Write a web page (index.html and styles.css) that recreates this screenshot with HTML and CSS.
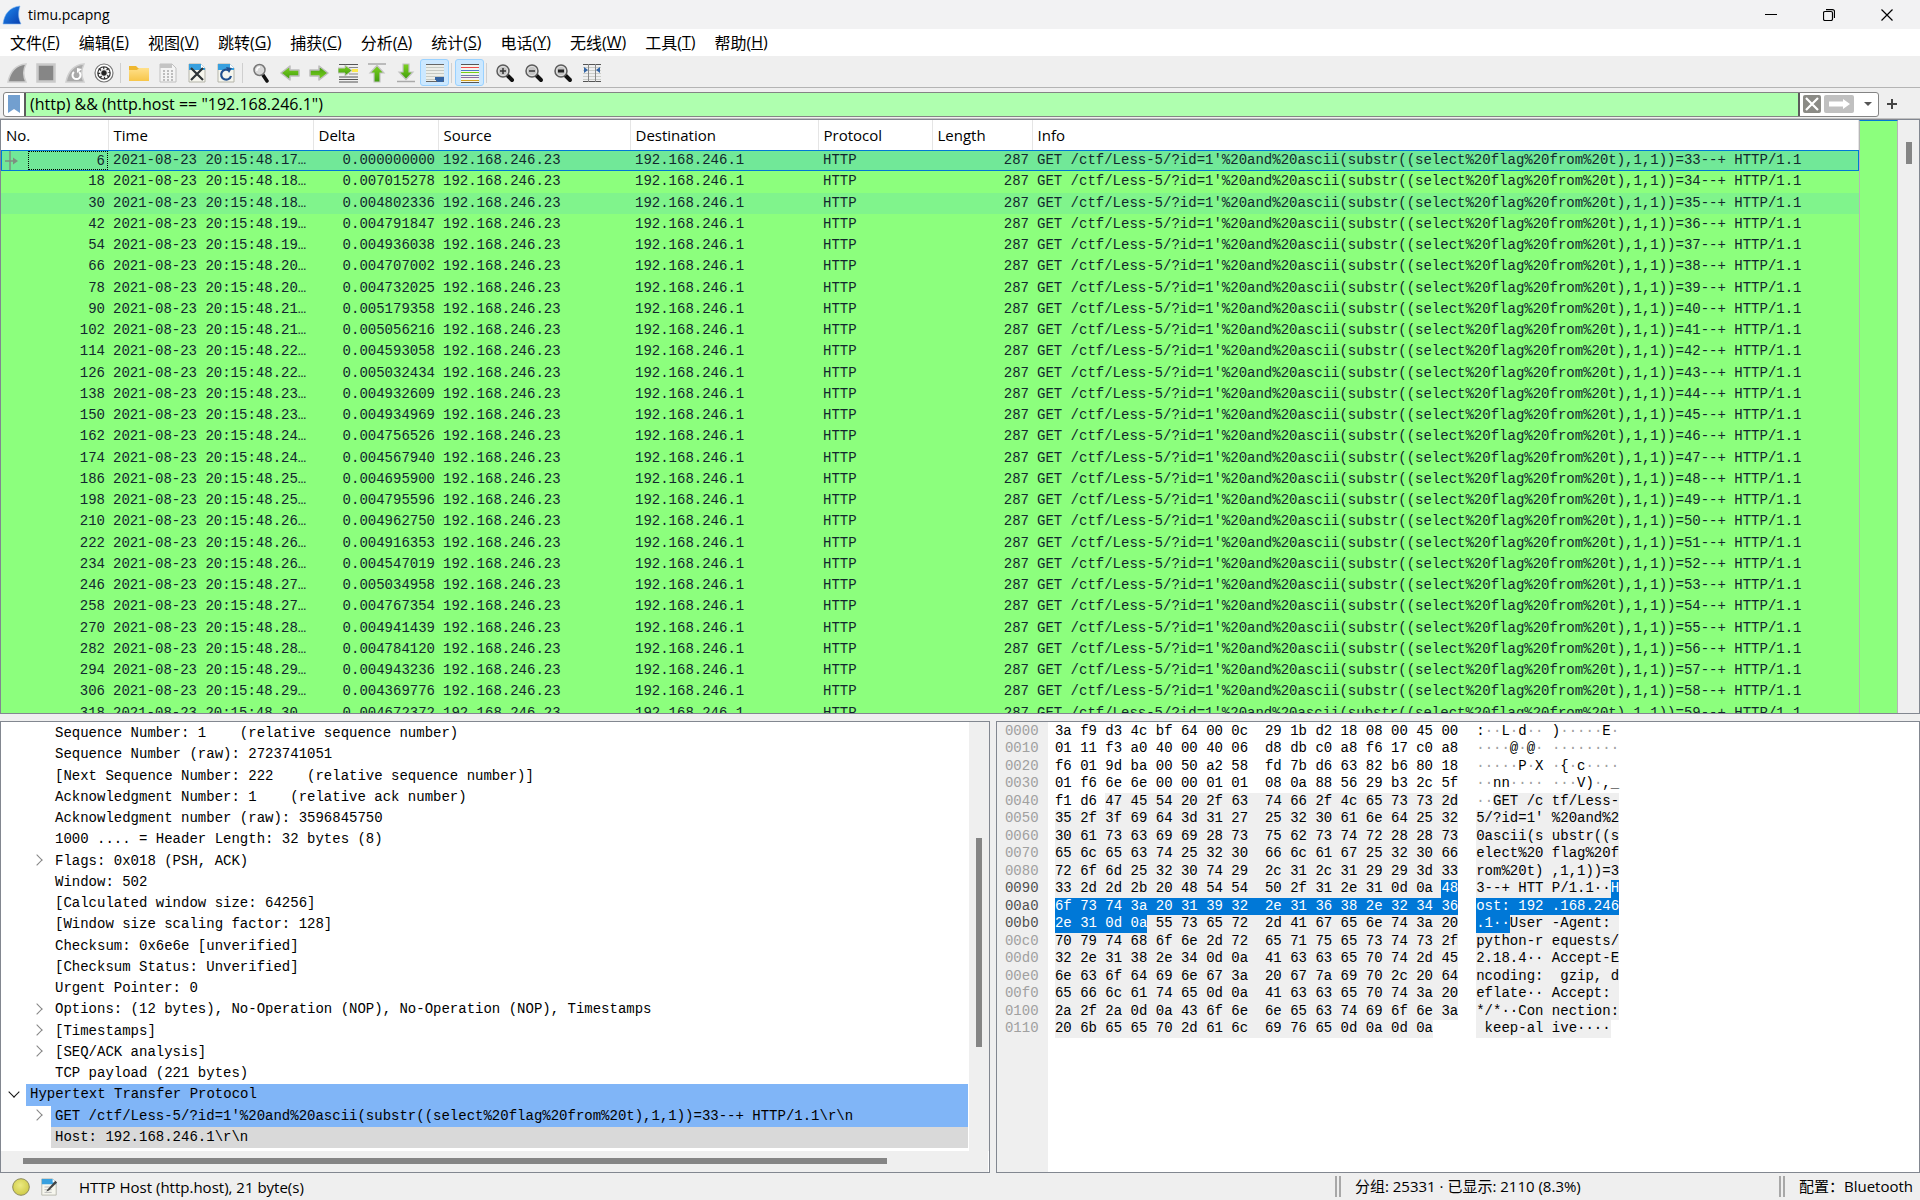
FILE: index.html
```html
<!DOCTYPE html>
<html lang="zh-CN">
<head>
    <meta charset="UTF-8">
    <meta name="viewport" content="width=device-width, initial-scale=1.0">
    <title>timu.pcapng</title>
    <link rel="stylesheet" href="styles.css">
</head>
<body>
    <!-- shared gradients and shapes -->
    <svg class="defs" width="0" height="0" aria-hidden="true">
        <defs>
            <linearGradient id="finBlue" x1="0" y1="0" x2="1" y2="1">
                <stop offset="0" stop-color="#1f8bf0"/>
                <stop offset="1" stop-color="#0a3fae"/>
            </linearGradient>
            <linearGradient id="arrowGreen" x1="0" y1="0" x2="0" y2="1">
                <stop offset="0" stop-color="#7ed321"/>
                <stop offset="1" stop-color="#3f9c0c"/>
            </linearGradient>
            <linearGradient id="folder" x1="0" y1="0" x2="0" y2="1">
                <stop offset="0" stop-color="#ffe08a"/>
                <stop offset="1" stop-color="#f7c64a"/>
            </linearGradient>
            <radialGradient id="bulb" cx="0.45" cy="0.4" r="0.6">
                <stop offset="0" stop-color="#ecea82"/>
                <stop offset="1" stop-color="#cfcb48"/>
            </radialGradient>
            <symbol id="lens" viewBox="0 0 20 20">
                <path d="M12 12l5 5" stroke="#111" stroke-width="4" stroke-linecap="round"/>
                <circle cx="8" cy="8" r="6" fill="#c4c4c4" stroke="#5c5c5c" stroke-width="1.5"/>
                <circle cx="8" cy="8" r="4.6" fill="none" stroke="#e0e0e0"/>
            </symbol>
            <symbol id="page" viewBox="0 0 20 20">
                <path d="M2 1h12l4 4v14H2z" fill="#f6f6ee" stroke="#b5b5aa"/>
                <path d="M2 1h12l4 4v2H2z" fill="#38a0df"/>
                <path d="M14 1v4h4z" fill="#fff"/>
            </symbol>
            <symbol id="arrow" viewBox="0 0 20 20">
                <path d="M1 10l9-7v4h9v6h-9v4z" fill="url(#arrowGreen)" stroke="#bdbdbd" stroke-width="1.500" stroke-linejoin="round"/>
            </symbol>
        </defs>
    </svg>

    <header class="titlebar">
        <svg class="app-icon" viewBox="0 0 20 20"><path d="M1 19C2 10 7 2 18 1c-2 6-2 12 1 18z" fill="url(#finBlue)" stroke="#7fb6ee" stroke-width=".6"/></svg>
        <span class="title">timu.pcapng</span>
        <button class="win-btn" aria-label="最小化"><svg viewBox="0 0 12 12"><path d="M0 5.500h12" stroke="#000"/></svg></button>
        <button class="win-btn" aria-label="还原"><svg viewBox="0 0 12 12"><rect x=".5" y="2.500" width="9" height="9" rx="1.500" fill="none" stroke="#000" stroke-width="1.200"/><path d="M3 .6h6.500a2 2 0 0 1 2 2V9" fill="none" stroke="#000" stroke-width="1.200"/></svg></button>
        <button class="win-btn" aria-label="关闭"><svg viewBox="0 0 12 12"><path d="M.5.5l11 11M11.500.5l-11 11" stroke="#000" stroke-width="1.200"/></svg></button>
    </header>

    <nav class="menubar">
        <button>文件(<u>F</u>)</button>
        <button>编辑(<u>E</u>)</button>
        <button>视图(<u>V</u>)</button>
        <button>跳转(<u>G</u>)</button>
        <button>捕获(<u>C</u>)</button>
        <button>分析(<u>A</u>)</button>
        <button>统计(<u>S</u>)</button>
        <button>电话(<u>Y</u>)</button>
        <button>无线(<u>W</u>)</button>
        <button>工具(<u>T</u>)</button>
        <button>帮助(<u>H</u>)</button>
    </nav>

    <div class="toolbar">
        <button aria-label="开始捕获"><svg viewBox="0 0 20 20"><path d="M1 19C3 9 8 2 19 1c-3 6-3 12 0 18z" fill="#8a8a8a" stroke="#cfcfcf" stroke-width="1.500"/></svg></button>
        <button aria-label="停止捕获"><svg viewBox="0 0 20 20"><rect x="1.500" y="1.500" width="17" height="17" fill="#868686" stroke="#cacaca" stroke-width="2.500"/></svg></button>
        <button aria-label="重新捕获"><svg viewBox="0 0 20 20"><path d="M1 19C3 9 8 2 19 1c-3 6-3 12 0 18z" fill="#a9a9a9" stroke="#cfcfcf" stroke-width="1.500"/><path d="M9 9a4 4 0 1 0 5 0" fill="none" stroke="#fff" stroke-width="2"/><path d="M12 10V5l5 1z" fill="#fff"/></svg></button>
        <button aria-label="捕获选项"><svg viewBox="0 0 20 20"><circle cx="10" cy="10" r="9" fill="#fff" stroke="#777" stroke-width="1.200"/><circle cx="10" cy="10" r="6.800" fill="#333"/><circle cx="10" cy="10" r="4.500" fill="none" stroke="#fff" stroke-width="2" stroke-dasharray="2.300 1.200"/><circle cx="10" cy="10" r="3.400" fill="none" stroke="#fff"/><circle cx="10" cy="10" r="2" fill="#222"/></svg></button>
        <span class="sep"></span>
        <button aria-label="打开"><svg viewBox="0 0 20 20"><path d="M0 3h7l2 2h11v13H0z" fill="#efb72f"/><path d="M0 7h8l2-2h10v13H0z" fill="url(#folder)"/></svg></button>
        <button aria-label="保存"><svg viewBox="0 0 20 20"><path d="M2 1h12l4 4v14H2z" fill="#f4f4f4" stroke="#c0c0c0"/><path d="M2 1h12v4H2z" fill="#c4c4c4"/><path d="M5 8h2M9 8h2M13 8h2M5 11h2M9 11h2M13 11h2M5 14h2M9 14h2M13 14h2M5 17h2M9 17h2M13 17h2" stroke="#bdbdbd" stroke-width="1.800"/></svg></button>
        <button aria-label="关闭文件"><svg viewBox="0 0 20 20"><use href="#page"/><path d="M4 5l12 12M16 5L4 17" stroke="#2e3436" stroke-width="2.200"/></svg></button>
        <button aria-label="重新载入"><svg viewBox="0 0 20 20"><use href="#page"/><path d="M13 7.500A5 5 0 1 0 15 13" fill="none" stroke="#204f8e" stroke-width="2.200"/><path d="M10 4l6 1-3 5z" fill="#204f8e"/></svg></button>
        <span class="sep"></span>
        <button aria-label="查找分组"><svg viewBox="0 0 20 20"><path d="M12 12l4 6" stroke="#111" stroke-width="3.500" stroke-linecap="round"/><circle cx="8.500" cy="7" r="5.500" fill="#d9d9d9" stroke="#777" stroke-width="1.500"/><path d="M6 8a3 3 0 0 1 3-4" stroke="#fff" fill="none" stroke-width="1.500"/></svg></button>
        <button aria-label="后退"><svg viewBox="0 0 20 20"><use href="#arrow"/></svg></button>
        <button aria-label="前进"><svg viewBox="0 0 20 20"><use href="#arrow" transform="rotate(180 10 10)"/></svg></button>
        <button aria-label="转到分组"><svg viewBox="0 0 20 20"><path d="M1 1.500h19M1 16.500h19M1 19h19M1 14h19" stroke="#555"/><path d="M11 4.500h9M11 11h9" stroke="#888"/><path d="M14 7.500h6" stroke="#fce94f" stroke-width="3"/><path d="M14 7.500L7 2v3H0v5h7v3z" fill="url(#arrowGreen)" stroke="#c3c3c3"/></svg></button>
        <button aria-label="首个分组"><svg viewBox="0 0 20 20"><path d="M1 1h18" stroke="#aaa" stroke-width="1.500"/><path d="M10 2.500l7 7.500h-4v9H7v-9H3z" fill="url(#arrowGreen)" stroke="#c3c3c3" stroke-width="1.200"/></svg></button>
        <button aria-label="末个分组"><svg viewBox="0 0 20 20"><path d="M1 18.500h18" stroke="#aaa" stroke-width="1.500"/><path d="M10 16.500L17 9h-4V1H7v8H3z" fill="url(#arrowGreen)" stroke="#c3c3c3" stroke-width="1.200"/></svg></button>
        <button class="on" aria-label="自动滚动"><svg class="crisp" viewBox="0 0 20 20"><path d="M1 1h18v18H1z" fill="#eceee9"/><path d="M1 1.500h18M1 18.500h18" stroke="#666"/><path d="M1 4.500h18M1 7.500h18M1 10.500h18M1 13.500h18M1 16.500h9" stroke="#c6c9c3"/><path d="M10 14h9v3l-2 2h-5l-2-2z" fill="#3465a4"/></svg></button>
        <span class="sep"></span>
        <button class="on" aria-label="分组着色"><svg class="crisp" viewBox="0 0 20 20"><path d="M1 1h18v18H1z" fill="#f3f5ee"/><path d="M1 1.500h18M1 19.500h18" stroke="#555"/><path d="M1 4.500h18" stroke="#ef4a4a"/><path d="M1 7.500h18" stroke="#4a7fc4"/><path d="M1 9.500h18" stroke="#73d216"/><path d="M1 12.500h18" stroke="#6b7fa8"/><path d="M1 14.500h18" stroke="#8b6fa0"/><path d="M1 17.500h18" stroke="#d5a21e"/></svg></button>
        <span class="sep"></span>
        <button aria-label="放大"><svg viewBox="0 0 20 20"><use href="#lens"/><path d="M5 8h6M8 5v6" stroke="#333" stroke-width="1.500"/></svg></button>
        <button aria-label="缩小"><svg viewBox="0 0 20 20"><use href="#lens"/><path d="M5 8h6" stroke="#333" stroke-width="1.500"/></svg></button>
        <button aria-label="正常大小"><svg viewBox="0 0 20 20"><use href="#lens"/><path d="M5 8h6" stroke="#222" stroke-width="3"/></svg></button>
        <button aria-label="调整列宽"><svg viewBox="0 0 20 20"><path d="M1 1.500h18M1 18.500h18" stroke="#555"/><path d="M1 4.500h18M1 7.500h18M1 10.500h18M1 13.500h18M1 16.500h18" stroke="#cbcdc8"/><path d="M6.500 1v18M13.500 1v18" stroke="#888"/><path d="M2 4l4 3-4 3zM18 4l-4 3 4 3z" fill="#3465a4"/></svg></button>
    </div>

    <form class="filterbar">
        <div class="filter-box">
            <button type="button" class="bookmark" aria-label="书签"><svg viewBox="0 0 12 18"><path d="M0 0h12v18l-6-4-6 4z" fill="#729fcf"/></svg></button>
            <input class="filter-input" type="text" aria-label="显示过滤器" value='(http) &amp;&amp; (http.host == "192.168.246.1")'>
            <button type="button" class="clear" aria-label="清除"><svg viewBox="0 0 18 18"><path d="M3 3l12 12M15 3L3 15" stroke="#fff" stroke-width="2.200"/></svg></button>
            <button type="button" class="apply" aria-label="应用"><svg viewBox="0 0 30 18"><path d="M5 6.500h14V4l7 5-7 5v-2.500H5z" fill="#fff"/></svg></button>
            <button type="button" class="history" aria-label="历史"><svg viewBox="0 0 8 4"><path d="M0 0h8L4 4z" fill="#555"/></svg></button>
        </div>
        <button type="button" class="add" aria-label="添加"><svg viewBox="0 0 10 10"><path d="M0 5h10M5 0v10" stroke="#444" stroke-width="2"/></svg></button>
    </form>

    <main class="panes">
        <section class="pane packet-list">
            <div class="list-scroll">
                <table class="packets">
                    <colgroup>
                        <col class="c-no"><col class="c-time"><col class="c-delta"><col class="c-src">
                        <col class="c-dst"><col class="c-proto"><col class="c-len"><col>
                    </colgroup>
                    <thead>
                        <tr><th>No.</th><th>Time</th><th>Delta</th><th>Source</th><th>Destination</th><th>Protocol</th><th>Length</th><th>Info</th></tr>
                    </thead>
                    <tbody id="packets"></tbody>
                </table>
            </div>
            <div class="minimap"></div>
            <div class="vbar list-bar"><div class="thumb list-thumb"></div></div>
        </section>

        <div class="lower">
            <section class="pane details">
                <div class="tree-row">
                    <ul class="tree">
                        <li><span class="twist"></span><span class="label">Sequence Number: 1    (relative sequence number)</span></li>
                        <li><span class="twist"></span><span class="label">Sequence Number (raw): 2723741051</span></li>
                        <li><span class="twist"></span><span class="label">[Next Sequence Number: 222    (relative sequence number)]</span></li>
                        <li><span class="twist"></span><span class="label">Acknowledgment Number: 1    (relative ack number)</span></li>
                        <li><span class="twist"></span><span class="label">Acknowledgment number (raw): 3596845750</span></li>
                        <li><span class="twist"></span><span class="label">1000 .... = Header Length: 32 bytes (8)</span></li>
                        <li><span class="twist closed"></span><span class="label">Flags: 0x018 (PSH, ACK)</span></li>
                        <li><span class="twist"></span><span class="label">Window: 502</span></li>
                        <li><span class="twist"></span><span class="label">[Calculated window size: 64256]</span></li>
                        <li><span class="twist"></span><span class="label">[Window size scaling factor: 128]</span></li>
                        <li><span class="twist"></span><span class="label">Checksum: 0x6e6e [unverified]</span></li>
                        <li><span class="twist"></span><span class="label">[Checksum Status: Unverified]</span></li>
                        <li><span class="twist"></span><span class="label">Urgent Pointer: 0</span></li>
                        <li><span class="twist closed"></span><span class="label">Options: (12 bytes), No-Operation (NOP), No-Operation (NOP), Timestamps</span></li>
                        <li><span class="twist closed"></span><span class="label">[Timestamps]</span></li>
                        <li><span class="twist closed"></span><span class="label">[SEQ/ACK analysis]</span></li>
                        <li><span class="twist"></span><span class="label">TCP payload (221 bytes)</span></li>
                        <li class="root"><span class="twist open"></span><span class="label proto">Hypertext Transfer Protocol</span></li>
                        <li><span class="twist closed"></span><span class="label proto">GET /ctf/Less-5/?id=1'%20and%20ascii(substr((select%20flag%20from%20t),1,1))=33--+ HTTP/1.1\r\n</span></li>
                        <li><span class="twist"></span><span class="label current">Host: 192.168.246.1\r\n</span></li>
                    </ul>
                    <div class="vbar"><div class="thumb tree-thumb"></div></div>
                </div>
                <div class="hbar"><div class="thumb"></div></div>
            </section>

            <section class="pane bytes">
                <div class="offsets" id="offsets"></div>
                <div class="hex" id="hex"></div>
                <div class="ascii" id="ascii"></div>
            </section>
        </div>
    </main>

    <footer class="statusbar">
        <div class="status-left">
            <svg class="expert" viewBox="0 0 18 18"><circle cx="9" cy="9" r="8.300" fill="url(#bulb)" stroke="#8d8b5a"/></svg>
            <svg class="note" viewBox="0 0 20 20"><use href="#page"/><path d="M5 10h8M5 13h8M5 16h8" stroke="#b5b5b5"/><path d="M8 13L17 3l2 2-9 9-3 1z" fill="#444"/></svg>
            <span>HTTP Host (http.host), 21 byte(s)</span>
        </div>
        <div class="status-cell packets-count">分组: 25331 · 已显示: 2110 (8.3%)</div>
        <div class="status-cell">配置：Bluetooth</div>
    </footer>

    <script>
        const times = [17, 18, 18, 19, 19, 20, 20, 21, 21, 22, 22, 23, 23, 24, 24, 25, 25, 26, 26, 26, 27, 27, 28, 28, 29, 29, 30];
        const deltas = [
            '0.000000000', '0.007015278', '0.004802336', '0.004791847', '0.004936038', '0.004707002', '0.004732025',
            '0.005179358', '0.005056216', '0.004593058', '0.005032434', '0.004932609', '0.004934969', '0.004756526',
            '0.004567940', '0.004695900', '0.004795596', '0.004962750', '0.004916353', '0.004547019', '0.005034958',
            '0.004767354', '0.004941439', '0.004784120', '0.004943236', '0.004369776', '0.004672372'
        ];
        const marker = '<svg viewBox="0 0 18 20"><path d="M8 0v20M3 10h11" stroke="#7d8f80" stroke-width="1.500" fill="none"/><path d="M11 6.500l5 3.500-5 3.500z" fill="#7d8f80"/></svg>';

        document.getElementById('packets').innerHTML = deltas.map((delta, i) => {
            const no = 6 + i * 12;
            const first = i === 0;
            const cls = first ? 'selected' : (i === 2 ? 'hover' : '');
            const noCell = first ? `<div class="focus-cell">${marker}<span>${no}</span></div>` : no;
            return `<tr class="${cls}"><td class="num">${noCell}</td><td>2021-08-23 20:15:48.${times[i]}…</td>` +
                `<td class="num">${delta}</td><td>192.168.246.23</td><td>192.168.246.1</td><td>HTTP</td><td class="num">287</td>` +
                `<td>GET /ctf/Less-5/?id=1'%20and%20ascii(substr((select%20flag%20from%20t),1,1))=${33 + i}--+ HTTP/1.1</td></tr>`;
        }).join('');

        // raw bytes of the frame: headers, then the HTTP request
        const bytes = (
            '3af9d34cbf64000c291bd21808004500' +
            '0111f3a040004006d8dbc0a8f617c0a8' +
            'f6019dba0050a258fd7bd66382b68018' +
            '01f66e6e00000101080a885629b32c5f' +
            'f1d6').match(/../g).map(h => parseInt(h, 16));
        const request = "GET /ctf/Less-5/?id=1'%20and%20ascii(substr((select%20flag%20from%20t),1,1))=33--+ HTTP/1.1\r\n" +
            'Host: 192.168.246.1\r\nUser-Agent: python-requests/2.18.4\r\nAccept-Encoding: gzip, deflate\r\n' +
            'Accept: */*\r\nConnection: keep-alive\r\n\r\n';
        for (const c of request) bytes.push(c.charCodeAt(0));

        const FIELD_START = 0x42, SEL_START = 0x9f, SEL_END = 0xb4;

        function kind(pos) {
            if (pos >= SEL_START && pos < SEL_END) return 'sel';
            return pos >= FIELD_START ? 'field' : 'plain';
        }

        function escapeChar(b) {
            return String.fromCharCode(b).replace('&', '&amp;').replace('<', '&lt;');
        }

        function cell(pos, ascii) {
            const b = bytes[pos];
            if (!ascii) return b.toString(16).padStart(2, '0');
            if (b >= 32 && b < 127) return escapeChar(b);
            return kind(pos) === 'plain' ? '<i>·</i>' : '·';
        }

        // a separator takes the background of a run only when both sides belong to it
        function buildRow(start, ascii) {
            let html = '', run = '', current = kind(start);
            for (let i = 0; i < 16 && start + i < bytes.length; i++) {
                const k = kind(start + i);
                const gap = ascii ? (i === 8 ? ' ' : '') : (i === 0 ? '' : i === 8 ? '  ' : ' ');
                if (k !== current) {
                    const gapKind = current === 'plain' ? 'plain' : 'field';
                    html += `<span class="${current}">${run}</span><span class="${gapKind}">${gap}</span>`;
                    run = '';
                    current = k;
                } else {
                    run += gap;
                }
                run += cell(start + i, ascii);
            }
            return `<div class="line">${html}<span class="${current}">${run}</span></div>`;
        }

        let offsets = '', hex = '', text = '';
        for (let start = 0; start < bytes.length; start += 16) {
            const active = start + 16 > SEL_START && start < SEL_END;
            offsets += `<div class="line${active ? ' active' : ''}">${start.toString(16).padStart(4, '0')}</div>`;
            hex += buildRow(start, false);
            text += buildRow(start, true);
        }
        document.getElementById('offsets').innerHTML = offsets;
        document.getElementById('hex').innerHTML = hex;
        document.getElementById('ascii').innerHTML = text;
    </script>
</body>
</html>
```
FILE: styles.css
```css
* {
    box-sizing: border-box;
}

body {
    margin: 0;
    height: 100vh;
    display: flex;
    flex-direction: column;
    overflow: hidden;
    background-color: #efefef;
    color: #000;
    font-family: "Open Sans", "Noto Sans CJK SC", sans-serif;
    font-size: 15px;
}

button {
    border: none;
    background: none;
    padding: 0;
    margin: 0;
    font: inherit;
    color: inherit;
    display: flex;
    align-items: center;
    justify-content: center;
}

svg {
    display: block;
}

.defs {
    position: absolute;
}

.crisp {
    shape-rendering: crispEdges;
}

/* title bar */
.titlebar {
    height: 29px;
    flex: none;
    display: flex;
    align-items: center;
    background-color: #f2f2f3;
    padding: 0 4px 0 2px;
}

.app-icon {
    width: 20px;
    height: 20px;
}

.title {
    flex: 1;
    padding-left: 6px;
    font-size: 14px;
}

.win-btn {
    width: 58px;
    height: 29px;
}

.win-btn svg {
    width: 12px;
    height: 12px;
}

/* menu */
.menubar {
    height: 27px;
    flex: none;
    display: flex;
    background-color: #fff;
    font-size: 16px;
}

.menubar button {
    padding: 0 9px 2px 10px;
    white-space: nowrap;
}

/* toolbar */
.toolbar {
    height: 32px;
    flex: none;
    display: flex;
    align-items: center;
    padding: 2px 0 0 2px;
    border-bottom: 1px solid #b4b4b4;
}

.toolbar button {
    width: 29px;
    height: 27px;
    border-radius: 3px;
}

.toolbar svg {
    width: 20px;
    height: 20px;
}

.toolbar .on {
    background-color: #cce8ff;
    border: 1px solid #99d1ff;
}

.sep {
    width: 1px;
    height: 20px;
    margin: 0 3px 0 2px;
    background-color: #cfcfcf;
}

/* display filter */
.filterbar {
    height: 31px;
    flex: none;
    display: flex;
    align-items: center;
    margin: 0;
    padding: 2px 0 0 3px;
    border-bottom: 1px solid #c0c0c0;
}

.filter-box {
    flex: 1;
    height: 25px;
    display: flex;
    align-items: center;
    background-color: #fff;
    border: 1px solid #848484;
    border-radius: 3px;
}

.bookmark {
    width: 20px;
}

.bookmark svg {
    width: 12px;
    height: 18px;
}

.filter-input {
    flex: 1;
    align-self: stretch;
    min-width: 0;
    padding: 0 4px;
    border: solid #5c5c5c;
    border-width: 0 2px;
    outline: none;
    background-color: #afffaf;
    font: inherit;
    font-size: 16px;
}

.clear,
.apply {
    height: 18px;
    margin-left: 3px;
    border-radius: 2px;
    background-color: #8b8b86;
}

.clear svg {
    width: 18px;
    height: 18px;
}

.apply {
    background-color: #c0c0c0;
}

.apply svg {
    width: 30px;
    height: 18px;
}

.history {
    width: 24px;
    padding-left: 4px;
    align-self: stretch;
}

.history svg {
    width: 8px;
    height: 4px;
}

.add {
    width: 25px;
    margin-right: 16px;
}

.add svg {
    width: 10px;
    height: 10px;
}

/* panes */
.panes {
    flex: 1;
    min-height: 0;
    display: flex;
    flex-direction: column;
    gap: 7px;
}

.pane {
    background-color: #fff;
    border: 1px solid #828790;
    min-width: 0;
    min-height: 0;
    overflow: hidden;
    display: flex;
}

.packet-list {
    flex: 594 1 0;
}

.lower {
    flex: 453 1 0;
    min-height: 0;
    display: flex;
    gap: 6px;
}

.list-scroll {
    flex: 1;
    min-width: 0;
    overflow: hidden;
}

.packets,
.tree,
.bytes {
    font-family: "Liberation Mono", "Noto Sans CJK SC", monospace;
    font-size: 14px;
}

.packets {
    width: 100%;
    table-layout: fixed;
    border-collapse: collapse;
}

.c-no { width: 107px; }
.c-time { width: 205px; }
.c-delta { width: 125px; }
.c-src { width: 192px; }
.c-dst { width: 188px; }
.c-proto { width: 114px; }
.c-len { width: 100px; }

.packets th {
    height: 30px;
    padding: 0 5px;
    background-color: #fff;
    border-right: 1px solid #e5e5e5;
    font-family: "Open Sans", sans-serif;
    font-size: 15px;
    font-weight: normal;
    text-align: left;
}

.packets td {
    height: 21px;
    padding: 0 3px 0 5px;
    line-height: 20px;
    background-color: #8cff7d;
    color: #12272e;
    white-space: nowrap;
    overflow: hidden;
    vertical-align: top;
}

.packets tr:nth-child(4n+2) td {
    height: 22px;
}

.packets .num {
    text-align: right;
}

.packets .hover td {
    background-color: #80f48c;
}

.packets .selected {
    outline: 1px solid #0078d7;
    outline-offset: -1px;
}

.packets .selected td {
    background-color: #71e898;
}

.packets .selected td:first-child {
    padding: 0;
    line-height: 18px;
}

.focus-cell {
    display: flex;
    height: 20px;
    padding: 1px 0 0 1px;
}

.focus-cell svg {
    width: 18px;
    height: 20px;
}

.focus-cell span {
    flex: 1;
    margin-left: 8px;
    padding-right: 2px;
    border: 1px dotted #000;
}

.minimap {
    width: 39px;
    background-color: #8cff7d;
    border: solid #b5b5b5;
    border-width: 0 1px;
    border-top: 1px solid #0078d7;
}

.vbar {
    width: 20px;
    flex: none;
    display: flex;
    flex-direction: column;
    align-items: center;
    background-color: #efefef;
}

.list-bar {
    width: 21px;
}

.thumb {
    background-color: #858585;
}

.vbar .thumb {
    width: 6px;
}

.list-thumb {
    margin-top: 22px;
    height: 22px;
}

/* packet details */
.details {
    flex: 990 1 0;
    flex-direction: column;
}

.tree-row {
    flex: 1;
    min-height: 0;
    display: flex;
}

.tree {
    flex: 1;
    min-width: 0;
    margin: 0;
    padding: 1px 1px 0 0;
    list-style: none;
    overflow: hidden;
}

.tree li {
    height: 21px;
    display: flex;
    padding-left: 25px;
    line-height: 20px;
    white-space: pre;
}

.tree li:nth-child(4n+2) {
    height: 22px;
}

.tree .root {
    padding-left: 0;
}

.twist {
    width: 25px;
    display: flex;
    align-items: center;
    justify-content: center;
    padding: 0 4px 2px 0;
}

.twist.closed::before,
.twist.open::before {
    content: "";
    width: 7px;
    height: 7px;
    border: solid #858585;
    border-width: 1px 1px 0 0;
    transform: rotate(45deg);
}

.twist.open {
    padding: 0 0 6px;
}

.twist.open::before {
    border-color: #111;
    transform: rotate(135deg);
}

.label {
    flex: 1;
    min-width: 0;
    padding-left: 4px;
    overflow: hidden;
}

.proto {
    background-color: #80b5f7;
}

.current {
    background-color: #d9d9d9;
}

.tree-thumb {
    margin-top: 116px;
    height: 209px;
}

.hbar {
    height: 21px;
    flex: none;
    display: flex;
    align-items: center;
    margin-right: 1px;
    padding: 0 101px 1px 22px;
    background-color: #efefef;
}

.hbar .thumb {
    flex: 1;
    height: 6px;
}

/* packet bytes */
.bytes {
    flex: 924 1 0;
}

.offsets {
    width: 51px;
    padding: 1px 8px;
    background-color: #efefef;
    color: #a0a0a0;
}

.offsets .active {
    color: #505050;
}

.hex {
    padding: 1px 0 0 7px;
}

.ascii {
    padding: 1px 0 0 18px;
}

.line {
    height: 17px;
    line-height: 17px;
    display: flex;
    white-space: pre;
}

.line:nth-child(even) {
    height: 18px;
}

.line i {
    font-style: normal;
    color: #a0a0a0;
}

.field {
    background-color: #efefef;
}

.sel {
    background-color: #0078d7;
    color: #fff;
}

/* status bar */
.statusbar {
    height: 27px;
    flex: none;
    display: flex;
    align-items: center;
    white-space: nowrap;
}

.status-left {
    flex: 1;
    display: flex;
    align-items: center;
    padding-left: 12px;
}

.expert {
    width: 18px;
    height: 18px;
    margin-right: 10px;
}

.note {
    width: 18px;
    height: 18px;
    margin-right: 21px;
}

.status-cell {
    height: 21px;
    line-height: 20px;
    padding: 0 7px 0 14px;
    border-left: 6px double #a8a8a8;
}

.packets-count {
    width: 444px;
}
```
